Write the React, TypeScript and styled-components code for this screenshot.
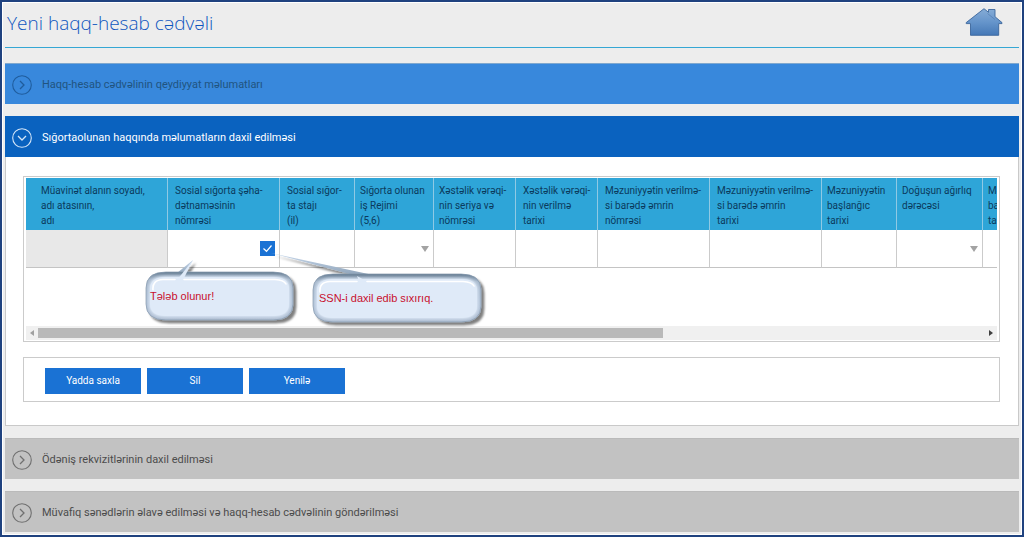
import React from "react";
import styled, { createGlobalStyle } from "styled-components";

const Global = createGlobalStyle`
  * { box-sizing: border-box; }
  body { margin: 0; background: #fff; font-family: Roboto, "Noto Sans", sans-serif; }
  button, input, select { font: inherit; border: 0; padding: 0; margin: 0; border-radius: 0; }
`;

const Frame = styled.div`
  border: 2px solid #1f427f;
  background: #ededed;
`;

const Inner = styled.div`
  border: 1px solid #fff;
  padding: 0 2px 2px;
`;

const Header = styled.header`
  display: flex;
  justify-content: space-between;
  align-items: flex-start;
  height: 45px;
  padding: 5px 16px 0 2px;
  border-bottom: 1px solid #35a7d4;
`;

const Title = styled.h1`
  margin: 0;
  font-family: "Open Sans", "Noto Sans", sans-serif;
  font-size: 19px;
  line-height: 30px;
  font-weight: 300;
  color: #0f56bf;
`;

const HomeLink = styled.a`
  display: block;
  height: 28px;
`;

const Sections = styled.main`
  display: flex;
  flex-direction: column;
  gap: 12px;
  padding-top: 15px;
`;

const tones = {
  done: { bg: "#3888dc", fg: "#21547f", icon: "#1f5c9c", edge: "#7fa8cf" },
  open: { bg: "#0a62bf", fg: "#ffffff", icon: "#d5e6f8", edge: "#0a62bf" },
  idle: { bg: "#c2c2c2", fg: "#4c4c4c", icon: "#707070", edge: "#bababa" },
};
type Tone = keyof typeof tones;

const Bar = styled.button<{ $tone: Tone }>`
  display: flex;
  align-items: center;
  gap: 10px;
  width: 100%;
  height: 41px;
  padding: 1px 7px 0;
  border-top: 1px solid ${(p) => tones[p.$tone].edge};
  background: ${(p) => tones[p.$tone].bg};
  color: ${(p) => tones[p.$tone].fg};
  font-size: 11px;
  line-height: 16px;
  text-align: left;

  svg {
    color: ${(p) => tones[p.$tone].icon};
  }
`;

const Body = styled.div`
  display: flex;
  flex-direction: column;
  gap: 15px;
  padding: 19px 18px 23px 17px;
  background: #fff;
  border: 1px solid #c9c9c9;
  border-top: 0;
`;

const Panel = styled.div`
  position: relative;
  border: 1px solid #cbcbcb;
  padding: 1px 2px;
`;

const TableView = styled.div`
  overflow: hidden;
  padding-bottom: 58px;
`;

const Table = styled.table`
  table-layout: fixed;
  width: 1471px;
  border-collapse: separate;
  border-spacing: 0;
`;

const Th = styled.th<{ $pad: number }>`
  height: 52px;
  padding: 5px 0 2px ${(p) => p.$pad}px;
  background: #2ea5d8;
  border-right: 1px solid #8fc9e4;
  color: #0b3a5c;
  font-size: 10px;
  line-height: 15px;
  font-weight: 400;
  text-align: left;
  vertical-align: top;
  white-space: nowrap;
`;

const Td = styled.td<{ $muted?: boolean }>`
  height: 38px;
  padding: 0;
  border-right: 1px solid #cbcbcb;
  border-bottom: 1px solid #c4c4c4;
  background: ${(p) => (p.$muted ? "#e8e8e8" : "#fff")};
`;

const Cell = styled.div`
  display: flex;
  align-items: center;
  padding-right: 4px;
`;

const Field = styled.input`
  flex: 1;
  min-width: 0;
  width: 100%;
  height: 36px;
  background: transparent;
  outline: 0;
`;

const Picker = styled.select`
  flex: 1;
  min-width: 0;
  height: 36px;
  appearance: none;
  background: transparent;
`;

const Confirm = styled.button`
  display: flex;
  align-items: center;
  justify-content: center;
  width: 15px;
  height: 15px;
  background: #1a72d4;
`;

const Scrollbar = styled.div`
  display: flex;
  align-items: center;
  height: 14px;
  background: #f0f0f0;
`;

const Arrow = styled.button`
  display: flex;
  align-items: center;
  justify-content: center;
  width: 12px;
  height: 14px;
  background: transparent;
`;

const Track = styled.div`
  flex: 1;
`;

const Thumb = styled.div`
  width: 66%;
  height: 10px;
  background: #b9b9b9;
`;

const Actions = styled(Panel)`
  display: flex;
  gap: 6px;
  padding: 10px 21px 7px;
`;

const Action = styled.button`
  width: 96px;
  height: 26px;
  background: #1a72d4;
  color: #fff;
  font-size: 10px;
  line-height: 16px;
`;

const Callout = styled.div<{ $x: number; $y: number }>`
  position: absolute;
  left: ${(p) => p.$x}px;
  top: ${(p) => p.$y}px;
  display: flex;
  pointer-events: none;
`;

const CalloutText = styled.span<{ $x: number; $y: number }>`
  position: absolute;
  left: ${(p) => p.$x}px;
  top: ${(p) => p.$y}px;
  font-family: "Liberation Sans", Arial, sans-serif;
  font-size: 11px;
  line-height: 16px;
  color: #c8102e;
  white-space: nowrap;
`;

const Chevron = ({ down }: { down?: boolean }) => (
  <svg width="20" height="20" viewBox="0 0 20 20" fill="none" stroke="currentColor" strokeWidth="1.1" aria-hidden="true">
    <circle cx="10" cy="10" r="9.3" />
    <path d={down ? "M6 8l4 4 4-4" : "M8 6l4 4-4 4"} strokeWidth="1.3" />
  </svg>
);

const Home = () => (
  <svg width="38" height="28" viewBox="0 0 38 28" aria-hidden="true">
    <defs>
      <linearGradient id="house" x1="0" y1="0" x2="0" y2="1">
        <stop offset="0" stopColor="#86acd6" />
        <stop offset="0.5" stopColor="#6695cb" />
        <stop offset="1" stopColor="#4578b6" />
      </linearGradient>
    </defs>
    <path
      d="M19 0.700L1.200 14.600V15.600H5.500V27.300H33.700V15.600H37V14.600L30 8.700V1.500H23.500V4.300Z"
      fill="url(#house)"
      stroke="#3c669c"
      strokeWidth="0.900"
      strokeLinejoin="round"
    />
    <path d="M22.500 5.500L30 11.500" stroke="#3c669c" strokeWidth="0.700" fill="none" opacity="0.6" />
  </svg>
);

type BubbleProps = { id: string; w: number; h: number; path: string; face: string; tail: string; notch: string; gloss: string };
const Bubble = ({ id, w, h, path, face, tail, notch, gloss }: BubbleProps) => (
  <svg width={w} height={h} viewBox={`0 0 ${w} ${h}`} aria-hidden="true">
    <defs>
      <linearGradient id={`${id}e`} x1="0" y1="0" x2="0" y2="1">
        <stop offset="0" stopColor="#667d93" />
        <stop offset="0.16" stopColor="#a9bacd" />
        <stop offset="0.6" stopColor="#b3c4d9" />
        <stop offset="1" stopColor="#b0bfd3" />
      </linearGradient>
      <linearGradient id={`${id}t`} x1="0" y1="0" x2="0" y2="1">
        <stop offset="0" stopColor="#c9d9ec" />
        <stop offset="1" stopColor="#8da2b8" />
      </linearGradient>
      <filter id={`${id}s`} x="-10%" y="-20%" width="125%" height="150%">
        <feDropShadow dx="3" dy="3" stdDeviation="1.3" floodColor="#000" floodOpacity="0.5" />
      </filter>
      <filter id={`${id}b`} x="-10%" y="-20%" width="120%" height="140%">
        <feGaussianBlur stdDeviation="1.4" />
      </filter>
    </defs>
    <g filter={`url(#${id}s)`}>
      <path d={tail} fill={`url(#${id}t)`} />
      <path d={path} fill={`url(#${id}e)`} stroke="#8195ab" strokeWidth="0.7" />
    </g>
    <path d={face} fill="#dfeaf8" stroke="#dfeaf8" strokeWidth="2" filter={`url(#${id}b)`} />
    <path d={face} fill="#dfeaf8" />
    <path d={notch} fill="#dfeaf8" />
    <path d={gloss} fill="none" stroke="#fff" strokeWidth="1.6" strokeLinecap="round" />
  </svg>
);

const rounded = (x: number, y: number, w: number, h: number, rx: number, ry: number) =>
  `M${x + rx} ${y}H${x + w - rx}Q${x + w} ${y} ${x + w} ${y + ry}V${y + h - ry}Q${x + w} ${y + h} ${x + w - rx} ${y + h}H${x + rx}Q${x} ${y + h} ${x} ${y + h - ry}V${y + ry}Q${x} ${y} ${x + rx} ${y}Z`;

type Kind = "muted" | "text" | "check" | "select";
const columns: { lines: string[]; width: number; pad: number; kind: Kind }[] = [
  { lines: ["Müavinət alanın soyadı,", "adı atasının,", "adı"], width: 142, pad: 15, kind: "muted" },
  { lines: ["Sosial sığorta şəha-", "dətnaməsinin", "nömrəsi"], width: 112, pad: 7, kind: "check" },
  { lines: ["Sosial sığor-", "ta stajı", "(il)"], width: 75, pad: 7, kind: "text" },
  { lines: ["Sığorta olunan", "iş Rejimi", "(5,6)"], width: 79, pad: 5, kind: "select" },
  { lines: ["Xəstəlik vərəqi-", "nin seriya və", "nömrəsi"], width: 82, pad: 5, kind: "text" },
  { lines: ["Xəstəlik vərəqi-", "nin verilmə", "tarixi"], width: 82, pad: 7, kind: "text" },
  { lines: ["Məzuniyyətin verilmə-", "si barədə əmrin", "nömrəsi"], width: 112, pad: 7, kind: "text" },
  { lines: ["Məzuniyyətin verilmə-", "si barədə əmrin", "tarixi"], width: 112, pad: 7, kind: "text" },
  { lines: ["Məzuniyyətin", "başlanğıc", "tarixi"], width: 75, pad: 5, kind: "text" },
  { lines: ["Doğuşun ağırlıq", "dərəcəsi"], width: 86, pad: 5, kind: "select" },
  { lines: ["Məzuniyyətin", "başa çatma", "tarixi"], width: 514, pad: 5, kind: "text" },
];

const Control = ({ kind, label }: { kind: Kind; label: string }) => {
  if (kind === "select")
    return (
      <Cell>
        <Picker aria-label={label} />
        <svg width="8" height="6" viewBox="0 0 8 6" aria-hidden="true">
          <path d="M0 0H8L4 6Z" fill="#a3a3a3" />
        </svg>
      </Cell>
    );
  return (
    <Cell>
      <Field aria-label={label} disabled={kind === "muted"} />
      {kind === "check" && (
        <Confirm aria-label="Təsdiq">
          <svg width="11" height="9" viewBox="0 0 11 9" fill="none" stroke="#fff" strokeWidth="1.2" aria-hidden="true">
            <path d="M1.500 4.500L4.500 7.300L9.500 1.500" />
          </svg>
        </Confirm>
      )}
    </Cell>
  );
};

export default function App() {
  return (
    <Frame>
      <Global />
      <Inner>
        <Header>
          <Title>Yeni haqq-hesab cədvəli</Title>
          <HomeLink href="#" aria-label="Ana səhifə">
            <Home />
          </HomeLink>
        </Header>
        <Sections>
          <Bar $tone="done">
            <Chevron />
            Haqq-hesab cədvəlinin qeydiyyat məlumatları
          </Bar>
          <section>
            <Bar $tone="open">
              <Chevron down />
              Sığortaolunan haqqında məlumatların daxil edilməsi
            </Bar>
            <Body>
              <Panel>
                <TableView>
                  <Table>
                    <colgroup>
                      {columns.map((c, i) => (
                        <col key={i} width={c.width} />
                      ))}
                    </colgroup>
                    <thead>
                      <tr>
                        {columns.map((c, i) => (
                          <Th key={i} $pad={c.pad}>
                            {c.lines.map((line) => (
                              <React.Fragment key={line}>
                                {line}
                                <br />
                              </React.Fragment>
                            ))}
                          </Th>
                        ))}
                      </tr>
                    </thead>
                    <tbody>
                      <tr>
                        {columns.map((c, i) => (
                          <Td key={i} $muted={c.kind === "muted"}>
                            <Control kind={c.kind} label={c.lines.join(" ")} />
                          </Td>
                        ))}
                      </tr>
                    </tbody>
                  </Table>
                </TableView>
                <Scrollbar>
                  <Arrow aria-label="Sola">
                    <svg width="4" height="6" viewBox="0 0 4 6" aria-hidden="true">
                      <path d="M4 0V6L0 3Z" fill="#a0a0a0" />
                    </svg>
                  </Arrow>
                  <Track>
                    <Thumb />
                  </Track>
                  <Arrow aria-label="Sağa">
                    <svg width="4" height="6" viewBox="0 0 4 6" aria-hidden="true">
                      <path d="M0 0V6L4 3Z" fill="#404040" />
                    </svg>
                  </Arrow>
                </Scrollbar>
                <Callout $x={117} $y={77}>
                  <Bubble
                    id="a"
                    w={164}
                    h={76}
                    tail="M36 19L52 6L44 20Z"
                    notch="M36 26L52 6L42 26Z"
                    gloss="M12 36Q11 26 22 25.500H34M43 25.500H134Q143 26 145 30"
                    path={rounded(5, 18, 147, 48, 20, 16)}
                    face={rounded(9, 23, 139, 39, 16, 12)}
                  />
                  <CalloutText $x={9} $y={34}>Tələb olunur!</CalloutText>
                </Callout>
                <Callout $x={241} $y={71}>
                  <Bubble
                    id="b"
                    w={232}
                    h={84}
                    tail="M6 5L108 27L92 28Z"
                    notch="M94 33L92 28L101 33Z"
                    gloss="M55 44Q54 34 65 33.500H92M102 33.500H198Q207 34 209 38"
                    path={rounded(48, 26, 168, 48, 20, 16)}
                    face={rounded(52, 31, 160, 39, 16, 12)}
                  />
                  <CalloutText $x={54} $y={42}>SSN-i daxil edib sıxırıq.</CalloutText>
                </Callout>
              </Panel>
              <Actions>
                <Action>Yadda saxla</Action>
                <Action>Sil</Action>
                <Action>Yenilə</Action>
              </Actions>
            </Body>
          </section>
          <Bar $tone="idle">
            <Chevron />
            Ödəniş rekvizitlərinin daxil edilməsi
          </Bar>
          <Bar $tone="idle">
            <Chevron />
            Müvafiq sənədlərin əlavə edilməsi və haqq-hesab cədvəlinin göndərilməsi
          </Bar>
        </Sections>
      </Inner>
    </Frame>
  );
}
